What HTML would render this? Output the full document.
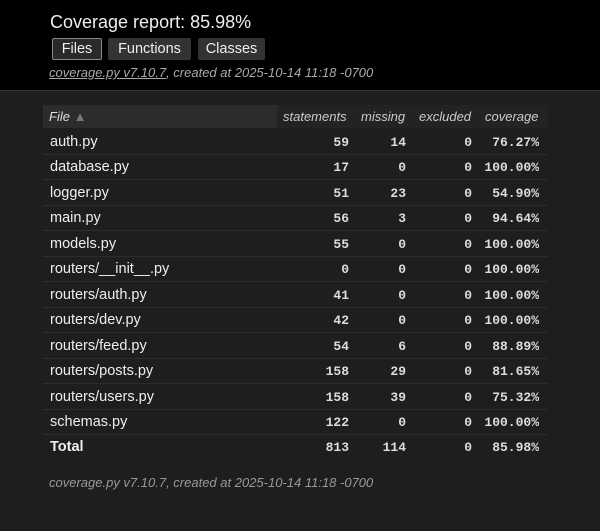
<!DOCTYPE html>
<html><head><style>
body{margin:0;width:600px;height:531px;background:#1e1e1e;font-family:"Liberation Sans",sans-serif;color:#eee;overflow:hidden;position:relative}
.hdr{position:absolute;left:0;top:0;width:600px;height:90px;background:#000;border-bottom:1px solid #333}
h1{position:absolute;left:50px;top:12px;margin:0;font-size:18px;font-weight:normal;color:#eee}
.btn{position:absolute;top:38px;height:22px;line-height:23px;font-size:14.5px;background:#333;border-radius:2px;color:#eee;box-sizing:border-box;text-align:center}
.meta{position:absolute;left:49px;top:65px;font-size:13px;font-style:italic;color:#aaa}
.meta u{text-decoration:underline}
.th{position:absolute;top:105px;height:23px;line-height:23px;font-size:13px;font-style:italic;color:#ccc}
.row{position:absolute;left:43px;width:505px;height:25px;border-bottom:1px solid #2d2d2d}
.row span{position:absolute;top:1px;line-height:25px}
.n{font-family:"Liberation Mono","DejaVu Sans Mono",monospace;font-size:13px;text-align:right;font-weight:bold;color:#ddd}
.f{left:7px;font-size:14.5px;color:#eee}
</style></head><body>
<div class="hdr"></div>
<h1>Coverage report: 85.98%</h1>
<div class="btn" style="left:52px;width:50px;border:1px solid #888;background:#2a2a2a;line-height:21px">Files</div>
<div class="btn" style="left:108px;width:83px">Functions</div>
<div class="btn" style="left:198px;width:67px">Classes</div>
<div class="meta"><u>coverage.py v7.10.7</u>, created at 2025-10-14 11:18 -0700</div>
<div style="position:absolute;left:43px;top:105px;width:234px;height:23px;background:#2c2c2c"></div>
<div style="position:absolute;left:277px;top:105px;width:271px;height:23px;background:#232323"></div>
<div class="th" style="left:49px;color:#ddd">File <span style="color:#777">▲</span></div>
<div class="th" style="left:283px">statements</div>
<div class="th" style="left:361px">missing</div>
<div class="th" style="left:419px">excluded</div>
<div class="th" style="left:485px">coverage</div>
<div id="rows"></div>
<div style="position:absolute;left:49px;top:475px;font-size:13px;font-style:italic;color:#999">coverage.py v7.10.7, created at 2025-10-14 11:18 -0700</div>
<script>
var d=[["auth.py",59,14,0,"76.27%"],["database.py",17,0,0,"100.00%"],["logger.py",51,23,0,"54.90%"],["main.py",56,3,0,"94.64%"],["models.py",55,0,0,"100.00%"],["routers/__init__.py",0,0,0,"100.00%"],["routers/auth.py",41,0,0,"100.00%"],["routers/dev.py",42,0,0,"100.00%"],["routers/feed.py",54,6,0,"88.89%"],["routers/posts.py",158,29,0,"81.65%"],["routers/users.py",158,39,0,"75.32%"],["schemas.py",122,0,0,"100.00%"],["Total",813,114,0,"85.98%"]];
var h="";d.forEach(function(r,i){var t=129+25.45*i;var last=i==12;
h+='<div class="row" style="top:'+t+'px;'+(last?'border:none':'')+'">'+
'<span class="f" style="'+(last?'font-weight:bold':'')+'">'+r[0]+'</span>'+
'<span class="n" style="right:199px">'+r[1]+'</span>'+
'<span class="n" style="right:142px">'+r[2]+'</span>'+
'<span class="n" style="right:76px">'+r[3]+'</span>'+
'<span class="n" style="right:9px">'+r[4]+'</span></div>';});
document.getElementById("rows").innerHTML=h;
</script>
</body></html>
